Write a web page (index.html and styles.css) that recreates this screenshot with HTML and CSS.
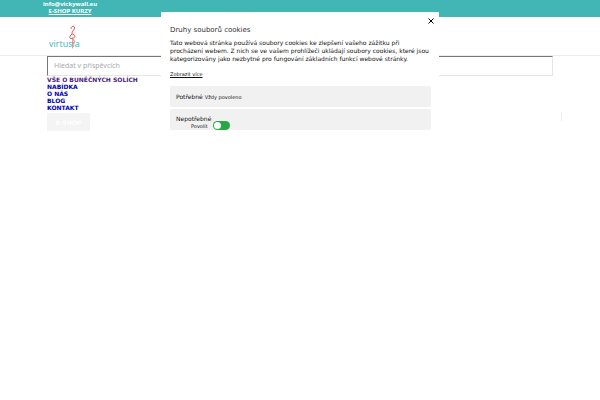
FILE: index.html
```
<!DOCTYPE html>
<html lang="cs">
<head>
    <meta charset="UTF-8">
    <meta name="viewport" content="width=device-width, initial-scale=1.0">
    <title>Virtusia</title>
    <link rel="stylesheet" href="styles.css">
</head>
<body>
    <div class="topbar">
        <div class="topbar-text">
            <a href="mailto:info@vickywall.eu">info@vickywall.eu</a>
            <a class="shop" href="#">E-SHOP KURZY</a>
        </div>
    </div>
    <header class="header">
        <a class="logo" href="#" aria-label="virtusia">
            <svg width="34" height="26" viewBox="0 0 34 26">
                <text x="1" y="22" class="logo-text">virtusia</text>
                <g fill="none" stroke="#e2574c" stroke-linecap="round">
                    <path d="M23 3.500 C23 .5 27 .5 26.500 3 C26 6 23.500 6 24 9" stroke-width="1"/>
                    <path d="M24 9 C21 11 21 14 24 13.500 C28 13 27.500 9 25 9.500" stroke-width="1"/>
                    <path d="M24.500 13 V23 M25 14 L27 17 L24.500 18" stroke-width=".6"/>
                </g>
            </svg>
        </a>
    </header>
    <main class="content">
        <input class="search" type="text" placeholder="Hledat v příspěvcích" aria-label="Hledat v příspěvcích">
        <nav class="menu">
            <a class="visited" href="#">VŠE O BUNĚČNÝCH SOLÍCH</a>
            <a href="#">NABÍDKA</a>
            <a href="#">O NÁS</a>
            <a href="#">BLOG</a>
            <a href="#">KONTAKT</a>
        </nav>
        <div class="cart-row">
            <button class="cart" type="button">E-SHOP</button>
            <span class="divider"></span>
        </div>
    </main>

    <div class="cookies" role="dialog" aria-labelledby="cookies-title">
        <button class="close" type="button" aria-label="Zavřít">
            <svg width="6" height="6" viewBox="0 0 6 6"><path d="M.5 .5 L5.500 5.500 M5.500 .5 L.5 5.500" stroke="#000" stroke-width="1"/></svg>
        </button>
        <h2 id="cookies-title">Druhy souborů cookies</h2>
        <p>Tato webová stránka používá soubory cookies ke zlepšení vašeho zážitku při procházení webem. Z nich se ve vašem prohlížeči ukládají soubory cookies, které jsou kategorizovány jako nezbytné pro fungování základních funkcí webové stránky.</p>
        <a class="more" href="#">Zobrazit více</a>
        <div class="option">
            <span class="name">Potřebné</span>
            <span class="state">Vždy povoleno</span>
        </div>
        <div class="option stacked">
            <span class="name">Nepotřebné</span>
            <label class="switch">
                <span class="state">Povolit</span>
                <input type="checkbox" checked>
            </label>
        </div>
    </div>
</body>
</html>
```
FILE: styles.css
```
* {
    box-sizing: border-box;
}
body {
    margin: 0;
    font-family: "DejaVu Sans", sans-serif;
    font-size: 6px;
    color: #111;
    background: #fff;
}
.topbar {
    height: 17px;
    padding-left: 43px;
    background: #42b6b5;
}
.topbar-text {
    display: inline-flex;
    flex-direction: column;
    align-items: center;
    font-family: "Noto Sans", sans-serif;
    font-weight: bold;
    line-height: 7px;
}
.topbar a {
    color: #fff;
    text-decoration: none;
}
.topbar .shop {
    text-decoration: underline;
}
.header {
    height: 39px;
    padding: 8px 48px;
    border-bottom: 1px solid #eee;
}
.logo svg {
    display: block;
}
.logo-text {
    font-family: "Open Sans", sans-serif;
    font-size: 9px;
    fill: #42b6b5;
}
.content {
    padding: 0 38px 0 47px;
}
.search {
    display: block;
    width: calc(100% - 9px);
    height: 20px;
    padding: 0 6px 2px;
    border: 1px solid #e5e5e5;
    border-top-color: #777;
    border-left-color: #777;
    font: 7px "Noto Sans", sans-serif;
}
.search::placeholder {
    color: #aaa;
}
.menu {
    display: flex;
    flex-direction: column;
    align-items: flex-start;
    font-weight: bold;
    line-height: 7px;
}
.menu a {
    color: #0000b4;
    text-decoration: none;
}
.menu .visited {
    color: #4b1e80;
}
.cart-row {
    display: flex;
    justify-content: space-between;
    align-items: flex-start;
    margin-top: 2px;
}
.cart {
    width: 43px;
    height: 18px;
    padding: 0;
    border: 0;
    background: #f4f4f4;
    color: #fff;
    font: bold 6px "DejaVu Sans", sans-serif;
}
.divider {
    width: 1px;
    height: 8px;
    background: #eee;
}
.cookies {
    position: absolute;
    top: 12px;
    left: 50%;
    width: 278px;
    margin-left: -139px;
    padding: 13px 8px 8px 9px;
    background: #fff;
    border-radius: 1px;
}
.close {
    position: absolute;
    top: 6px;
    right: 5px;
    display: flex;
    padding: 0;
    border: 0;
    background: none;
}
.cookies h2 {
    margin: 0 0 4px;
    font-size: 7px;
    font-weight: normal;
    line-height: 10px;
    color: #333;
}
.cookies p {
    margin: 0 0 7px;
    line-height: 8px;
}
.more {
    display: block;
    margin-bottom: 8px;
    font-size: 5px;
    line-height: 8px;
    color: #111;
}
.option {
    display: flex;
    align-items: center;
    height: 21px;
    margin-bottom: 2px;
    padding: 0 6px;
    gap: 2px;
    background: #f1f1f1;
    border-radius: 2px;
}
.state {
    font-size: 5px;
}
.stacked {
    flex-direction: column;
    align-items: flex-start;
    justify-content: flex-end;
    gap: 0;
}
.stacked .name {
    line-height: 5px;
}
.switch {
    display: flex;
    align-items: center;
    gap: 5px;
    margin-left: 15px;
}
.switch input {
    appearance: none;
    width: 17px;
    height: 9px;
    margin: 0;
    padding: 1px;
    border-radius: 5px;
    background: #28a745;
}
.switch input::before {
    content: "";
    display: block;
    width: 7px;
    height: 7px;
    border-radius: 50%;
    background: #fff;
}
```
